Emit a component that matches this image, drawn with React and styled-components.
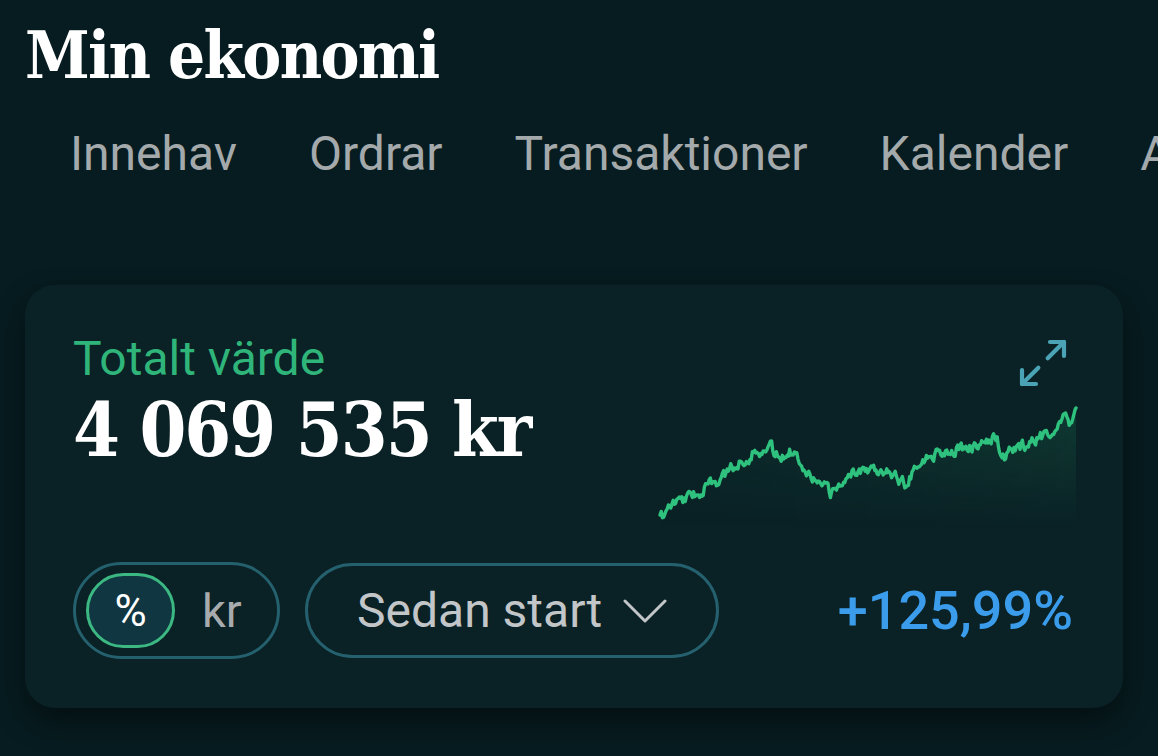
import React from 'react'
import styled, { createGlobalStyle } from 'styled-components'
import { Maximize2 } from 'lucide-react'

const GlobalStyle = createGlobalStyle`
  html, body {
    margin: 0;
    padding: 0;
    background: #071c20;
    overflow: hidden;
  }
  * { box-sizing: border-box; }
`

const Page = styled.div`
  width: 1158px;
  height: 756px;
  padding: 17px 35px 0 25px;
  background: #071c20;
  font-family: Roboto, 'Liberation Sans', sans-serif;
  overflow: hidden;
`

const Title = styled.h1`
  margin: 0;
  font-family: 'DejaVu Serif', 'Liberation Serif', serif;
  font-weight: 700;
  font-stretch: condensed;
  font-size: 65px;
  line-height: 77px;
  color: #ffffff;
  letter-spacing: -1.7px;
`

const Tabs = styled.nav`
  display: flex;
  gap: 72px;
  margin-top: 32px;
  padding-left: 45px;
  white-space: nowrap;
  width: 1133px;
  overflow: hidden;
`

const Tab = styled.span`
  font-size: 48px;
  line-height: 56px;
  color: #a4a9ab;
`

const Card = styled.section`
  margin-top: 103px;
  width: 1098px;
  padding: 46px 43px 49px 48px;
  background: #0a2125;
  border-radius: 30px;
  box-shadow: 0 14px 30px rgba(0, 0, 0, 0.45);
  display: flex;
  flex-direction: column;
`

const TopRow = styled.div`
  display: flex;
  justify-content: space-between;
  align-items: flex-start;
`

const Summary = styled.div`
  display: flex;
  flex-direction: column;
`

const Label = styled.div`
  font-size: 48px;
  line-height: 55px;
  color: #2fb57a;
`

const Value = styled.div`
  margin-top: 4px;
  font-family: 'DejaVu Serif', 'Liberation Serif', serif;
  font-weight: 700;
  font-stretch: condensed;
  font-size: 75px;
  line-height: 80px;
  letter-spacing: -2px;
  color: #ffffff;
`

const ChartArea = styled.div`
  display: flex;
  flex-direction: column;
  align-items: flex-end;
  padding-top: 4px;
  width: 424px;
`

const ExpandButton = styled.button`
  display: flex;
  padding: 0;
  margin-right: 9px;
  border: none;
  background: transparent;
  color: #4ba4b6;
  cursor: pointer;
`

const Chart = styled.svg`
  display: block;
  margin-top: 7px;
`

const BottomRow = styled.div`
  display: flex;
  align-items: center;
  gap: 25px;
  margin-top: 32px;
`

const Toggle = styled.div`
  display: flex;
  align-items: center;
  gap: 27px;
  width: 207px;
  height: 97px;
  padding: 0 0 0 10px;
  border: 3px solid #24606d;
  border-radius: 49px;
`

const ToggleOption = styled.span`
  display: flex;
  align-items: center;
  justify-content: center;
  font-size: ${p => (p.$active ? '44px' : '47px')};
  color: ${p => (p.$active ? '#ffffff' : '#a7abad')};
  ${p =>
    p.$active &&
    `
    width: 89px;
    height: 75px;
    border: 3px solid #3cb883;
    border-radius: 38px;
    background: #0f3641;
  `}
`

const PeriodSelect = styled.button`
  display: flex;
  align-items: center;
  gap: 21px;
  width: 414px;
  height: 95px;
  padding: 0 0 0 49px;
  border: 3px solid #24606d;
  border-radius: 48px;
  background: transparent;
  font-family: Roboto, 'Liberation Sans', sans-serif;
  font-size: 48px;
  color: #c2c6c8;
  cursor: pointer;
`

const Change = styled.div`
  margin-left: auto;
  padding-right: 7px;
  font-size: 54px;
  font-weight: 500;
  color: #3a9cea;
`

const keys = [
  [660, 520], [668, 508], [680, 500], [692, 496], [705, 488], [720, 480],
  [735, 465], [748, 456], [760, 450], [770, 447], [778, 457], [790, 450],
  [800, 460], [810, 474], [820, 486], [832, 494], [845, 478], [858, 470],
  [872, 467], [886, 470], [898, 478], [905, 484], [915, 466], [930, 456],
  [945, 450], [960, 449], [975, 448], [988, 442], [997, 436], [1002, 462],
  [1008, 452], [1020, 448], [1035, 441], [1050, 432], [1062, 420],
  [1066, 412], [1070, 426], [1076, 408]
]

const rng = (seed => () => {
  seed |= 0
  seed = (seed + 0x6d2b79f5) | 0
  let t = Math.imul(seed ^ (seed >>> 15), 1 | seed)
  t = (t + Math.imul(t ^ (t >>> 7), 61 | t)) ^ t
  return ((t ^ (t >>> 14)) >>> 0) / 4294967296
})(7)

const baseY = x => {
  for (let i = 1; i < keys.length; i++) {
    const [x1, y1] = keys[i]
    const [x0, y0] = keys[i - 1]
    if (x <= x1) return y0 + ((x - x0) / (x1 - x0)) * (y1 - y0)
  }
  return keys[keys.length - 1][1]
}

const OX = 656
const OY = 398
const W = 424
const H = 132

const points = []
let noise = 0
for (let x = 660; x <= 1076; x += 1.2) {
  noise = noise * 0.5 + (rng() - 0.5) * 10
  points.push([x - OX, baseY(x) + noise - OY])
}
points.push([1076 - OX, 408 - OY])

const linePath = points.map((p, i) => `${i ? 'L' : 'M'}${p[0].toFixed(1)} ${p[1].toFixed(1)}`).join(' ')
const areaPath = `${linePath} L${(1076 - OX).toFixed(1)} ${H} L${(660 - OX).toFixed(1)} ${H} Z`

const Sparkline = () => (
  <Chart width={W} height={H} viewBox={`0 0 ${W} ${H}`}>
    <defs>
      <linearGradient id="fillV" x1="0" y1="0" x2="0" y2="1">
        <stop offset="0" stopColor="#2ec27e" stopOpacity="0.16" />
        <stop offset="1" stopColor="#2ec27e" stopOpacity="0" />
      </linearGradient>
      <linearGradient id="fadeH" x1="0" y1="0" x2="1" y2="0">
        <stop offset="0" stopColor="#fff" stopOpacity="0.25" />
        <stop offset="1" stopColor="#fff" stopOpacity="1" />
      </linearGradient>
      <mask id="areaMask">
        <rect width={W} height={H} fill="url(#fadeH)" />
      </mask>
    </defs>
    <path d={areaPath} fill="url(#fillV)" mask="url(#areaMask)" />
    <path d={linePath} fill="none" stroke="#2ec27e" strokeWidth="3.4" strokeLinejoin="round" strokeLinecap="round" />
  </Chart>
)

const Chevron = () => (
  <svg width="44" height="26" viewBox="0 0 44 26" fill="none">
    <path d="M2 3 L22 23 L42 3" stroke="#c2c6c8" strokeWidth="3" strokeLinecap="round" strokeLinejoin="round" />
  </svg>
)

const tabs = ['Innehav', 'Ordrar', 'Transaktioner', 'Kalender', 'Avkastning']

export default function App() {
  return (
    <>
      <GlobalStyle />
      <Page>
        <Title>Min ekonomi</Title>
        <Tabs>
          {tabs.map(t => (
            <Tab key={t}>{t}</Tab>
          ))}
        </Tabs>
        <Card>
          <TopRow>
            <Summary>
              <Label>Totalt värde</Label>
              <Value>4 069 535 kr</Value>
            </Summary>
            <ChartArea>
              <ExpandButton aria-label="Förstora">
                <Maximize2 size={56} strokeWidth={1.8} />
              </ExpandButton>
              <Sparkline />
            </ChartArea>
          </TopRow>
          <BottomRow>
            <Toggle>
              <ToggleOption $active>%</ToggleOption>
              <ToggleOption>kr</ToggleOption>
            </Toggle>
            <PeriodSelect>
              Sedan start
              <Chevron />
            </PeriodSelect>
            <Change>+125,99%</Change>
          </BottomRow>
        </Card>
      </Page>
    </>
  )
}
